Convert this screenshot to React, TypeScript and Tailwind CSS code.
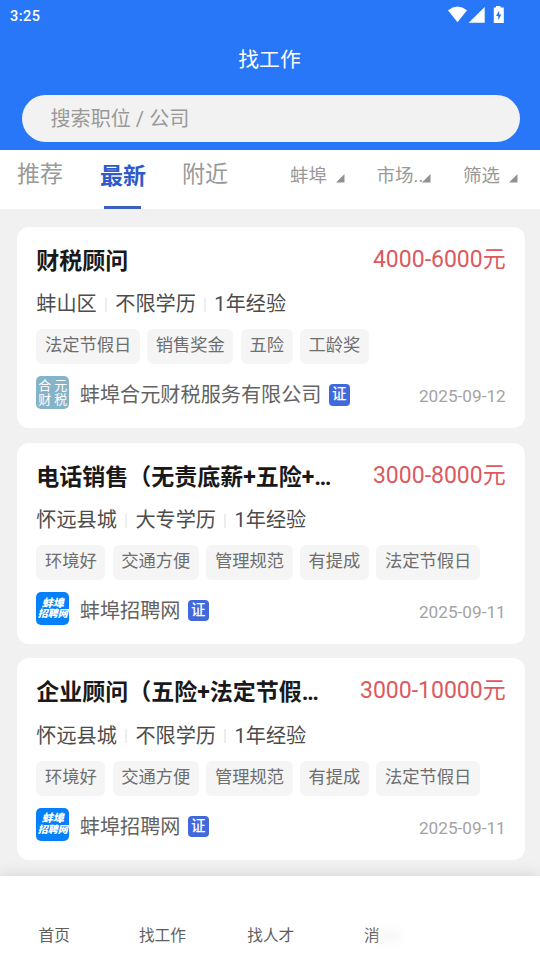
type Job = {
  title: string;
  salary: string;
  meta: string[];
  tags: string[];
  company: string;
  logo: "heyuan" | "zhaopin";
  date: string;
};

const jobs: Job[] = [
  {
    title: "财税顾问",
    salary: "4000-6000元",
    meta: ["蚌山区", "不限学历", "1年经验"],
    tags: ["法定节假日", "销售奖金", "五险", "工龄奖"],
    company: "蚌埠合元财税服务有限公司",
    logo: "heyuan",
    date: "2025-09-12",
  },
  {
    title: "电话销售（无责底薪+五险+…",
    salary: "3000-8000元",
    meta: ["怀远县城", "大专学历", "1年经验"],
    tags: ["环境好", "交通方便", "管理规范", "有提成", "法定节假日"],
    company: "蚌埠招聘网",
    logo: "zhaopin",
    date: "2025-09-11",
  },
  {
    title: "企业顾问（五险+法定节假…",
    salary: "3000-10000元",
    meta: ["怀远县城", "不限学历", "1年经验"],
    tags: ["环境好", "交通方便", "管理规范", "有提成", "法定节假日"],
    company: "蚌埠招聘网",
    logo: "zhaopin",
    date: "2025-09-11",
  },
];

function StatusBar() {
  return (
    <div className="flex h-[30px] items-center justify-between pr-[34px] pl-[10px]">
      <span className="mt-[3px] text-[14.5px] leading-5 font-medium tracking-[0.5px] text-white">3:25</span>
      <svg width="58" height="18" viewBox="0 0 58 18" fill="#fff">
        <path d="M0 4.200Q9.500 -3.200 19 4.200L9.500 16.300Z" />
        <path d="M36.700 1V16.700H20.700Z" />
        <path d="M48 0h4.500v1.500H55.800V17H45.800V1.500H48Z" />
        <path d="M51.200 4.500 48 10h2.200v4L53.500 8.500H51.200Z" fill="#2777f8" />
      </svg>
    </div>
  );
}

function Filter({ label, className }: { label: string; className: string }) {
  return (
    <div className={`flex items-end justify-between ${className}`}>
      <span className="w-0 text-[18.500px] leading-6 whitespace-nowrap">{label}</span>
      <svg width="9" height="9" viewBox="0 0 9 9" className="mb-[5px]">
        <path d="M8.500 0V8.500H0Z" fill="#919191" />
      </svg>
    </div>
  );
}

function Logo({ kind }: { kind: Job["logo"] }) {
  if (kind === "heyuan") {
    return (
      <div className="flex size-[33px] shrink-0 flex-col justify-center rounded-[5px] bg-[#85b4c9] px-[2px] text-[13px] leading-[14px] text-white">
        <div className="flex justify-between"><span>合</span><span>元</span></div>
        <div className="flex justify-between"><span>财</span><span>税</span></div>
      </div>
    );
  }
  return (
    <div className="flex size-[33px] shrink-0 flex-col items-center justify-center rounded-[5px] bg-[#0580fb] pt-px leading-[10.500px] font-black whitespace-nowrap text-white italic">
      <span className="text-[11px]">蚌埠</span>
      <span className="text-[10px]">招聘网</span>
    </div>
  );
}

function JobCard({ job }: { job: Job }) {
  return (
    <article className="h-[201.300px] rounded-[12px] bg-white px-[19.300px] pt-[17px]">
      <div className="flex h-[34px] items-start justify-between">
        <h2 className="text-[23px] leading-[35px] font-bold whitespace-nowrap text-[#191919]">{job.title}</h2>
        <span className="text-[23px] leading-[32px] whitespace-nowrap text-[#dc5a5e]">{job.salary}</span>
      </div>
      <div className="mt-[13.400px] flex h-[27px] items-center text-[20.150px] leading-[27px] text-[#4c4c4c]">
        {job.meta.map((m, i) => (
          <div key={m} className="flex items-center">
            {i > 0 && <i className="mx-[8.500px] h-[14px] w-[1.500px] bg-[#eeeeee]" />}
            <span>{m}</span>
          </div>
        ))}
      </div>
      <div className="mt-[11px] flex gap-[7.400px]">
        {job.tags.map((t) => (
          <span key={t} className="h-[35px] rounded-[6px] bg-[#f5f5f5] px-[8.600px] text-[17.280px] leading-[33px] text-[#6e6e6e]">{t}</span>
        ))}
      </div>
      <div className="mt-[12px] flex h-[33px] items-center">
        <Logo kind={job.logo} />
        <span className="mt-[4.600px] ml-[10.500px] text-[20.150px] leading-[28px] text-[#636363]">{job.company}</span>
        <span className="mt-[4px] ml-[7px] size-[21.500px] rounded-[4px] bg-[#4169dc] text-center text-[14.500px] leading-[22px] font-medium text-white">证</span>
        <span className="mt-[7px] ml-auto text-[17.200px] leading-5 text-[#a3a3a3]">{job.date}</span>
      </div>
    </article>
  );
}

export default function App() {
  return (
    <div className="flex h-[960px] w-[540px] flex-col overflow-hidden bg-[#f1f1f1] font-[Roboto,'Noto_Sans_CJK_SC',sans-serif]">
      <header className="h-[150px] shrink-0 bg-[#2777f8]">
        <StatusBar />
        <h1 className="mt-[15px] pr-px text-center text-[20.800px] leading-[30px] text-white">找工作</h1>
        <div className="mt-[20px] mr-[20px] ml-[22px] h-[47px] rounded-full bg-[#f2f2f2] pl-[28.500px] text-[20.100px] leading-[48px] text-[#999999]">搜索职位 / 公司</div>
      </header>
      <nav className="flex h-[59px] shrink-0 bg-white pl-[17px] text-[#999999]">
        <span className="w-[83px] text-[23px] leading-[50px]">推荐</span>
        <div className="flex w-[82px] flex-col justify-between text-[23px] leading-[54px] font-bold text-[#3059c9]">
          <span className="h-[54px]">最新</span>
          <i className="ml-[4px] h-[3px] w-[37px] bg-[#3b5fbe]" />
        </div>
        <span className="w-[108px] text-[23px] leading-[50px]">附近</span>
        <div className="mt-[14px] flex h-6">
          <Filter label="蚌埠" className="w-[54.500px]" />
          <Filter label="市场.." className="ml-[32px] w-[54.500px]" />
          <Filter label="筛选" className="ml-[32px] w-[54.500px]" />
        </div>
      </nav>
      <main className="flex min-h-0 flex-1 flex-col gap-[14.400px] pt-[18px] pr-[15px] pl-[17px]">
        {jobs.map((job) => <JobCard key={job.title} job={job} />)}
      </main>
      <footer className="z-10 grid h-[84px] shrink-0 grid-cols-[repeat(5,108.300px)] bg-white pt-[46px] text-center text-[15.700px] leading-7 text-[#5e5e5e] shadow-[0_-2px_14px_rgba(0,0,0,0.11)]">
        <span>首页</span>
        <span>找工作</span>
        <span>找人才</span>
        <div className="flex h-7 items-center pl-[39px]">
          <span>消</span>
          <i className="h-[14px] w-[20px] bg-[#f7f7f7] blur-[4px]" />
        </div>
      </footer>
    </div>
  );
}
